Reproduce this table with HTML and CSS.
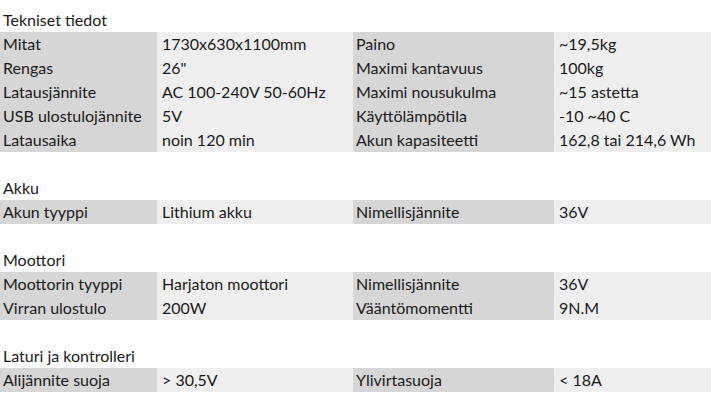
FILE: index.html
```html
<!DOCTYPE html>
<html lang="fi">
<head>
<meta charset="utf-8">
<link rel="stylesheet" href="styles.css">
</head>
<body>
<div class="sheet">
  <section class="block">
    <div class="title">Tekniset tiedot</div>
    <div class="grid">
      <div class="c k">Mitat</div><div class="c v">1730x630x1100mm</div><div class="c k">Paino</div><div class="c v">~19,5kg</div>
      <div class="c k">Rengas</div><div class="c v">26"</div><div class="c k">Maximi kantavuus</div><div class="c v">100kg</div>
      <div class="c k">Latausjännite</div><div class="c v">AC 100-240V 50-60Hz</div><div class="c k">Maximi nousukulma</div><div class="c v">~15 astetta</div>
      <div class="c k">USB ulostulojännite</div><div class="c v">5V</div><div class="c k">Käyttölämpötila</div><div class="c v">-10 ~40 C</div>
      <div class="c k">Latausaika</div><div class="c v">noin 120 min</div><div class="c k">Akun kapasiteetti</div><div class="c v">162,8 tai 214,6 Wh</div>
    </div>
  </section>
  <section class="block">
    <div class="title">Akku</div>
    <div class="grid">
      <div class="c k">Akun tyyppi</div><div class="c v">Lithium akku</div><div class="c k">Nimellisjännite</div><div class="c v">36V</div>
    </div>
  </section>
  <section class="block">
    <div class="title">Moottori</div>
    <div class="grid">
      <div class="c k">Moottorin tyyppi</div><div class="c v">Harjaton moottori</div><div class="c k">Nimellisjännite</div><div class="c v">36V</div>
      <div class="c k">Virran ulostulo</div><div class="c v">200W</div><div class="c k">Vääntömomentti</div><div class="c v">9N.M</div>
    </div>
  </section>
  <section class="block">
    <div class="title">Laturi ja kontrolleri</div>
    <div class="grid">
      <div class="c k">Alijännite suoja</div><div class="c v">&gt; 30,5V</div><div class="c k">Ylivirtasuoja</div><div class="c v">&lt; 18A</div>
    </div>
  </section>
</div>
</body>
</html>
```
FILE: styles.css
```css
html, body {
  margin: 0;
  padding: 0;
  background: #ffffff;
}
body {
  font-family: Lato, "Open Sans", sans-serif;
  font-size: 16px;
  line-height: 24px;
  color: #1a1a1a;
}
.sheet {
  width: 711px;
  padding-top: 8px;
  display: flex;
  flex-direction: column;
  gap: 24px;
}
.title {
  height: 24px;
  padding-left: 3px;
  white-space: nowrap;
}
.grid {
  display: grid;
  grid-template-columns: 157px 196px 201px 157px;
  grid-auto-rows: 24px;
}
.c {
  white-space: nowrap;
  overflow: hidden;
}
.k {
  background: #d6d6d6;
  padding-left: 3px;
}
.v {
  background: #efefef;
  padding-left: 5px;
}
```
